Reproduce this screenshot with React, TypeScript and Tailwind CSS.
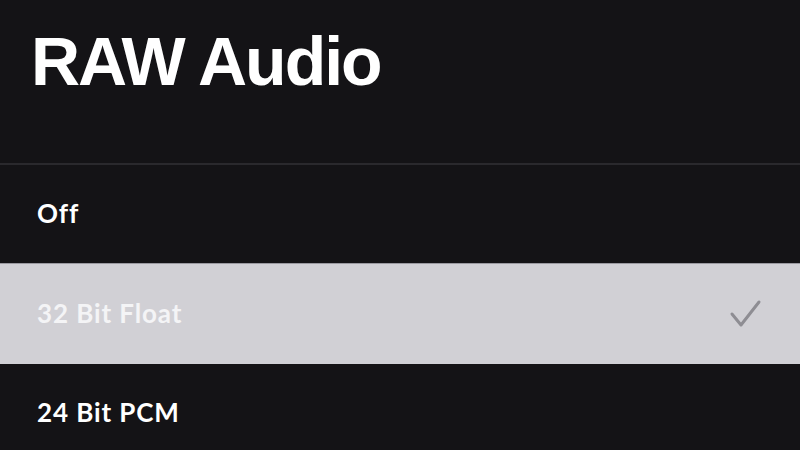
export default function App() {
  const rowText = "text-[26px] font-bold leading-none text-white tracking-[0.9px] -mt-[2px]";
  return (
    <div className="w-[800px] h-[450px] overflow-hidden bg-[#141316]" style={{ fontFamily: "Lato, 'Noto Sans', sans-serif" }}>
      <div className="h-[163px] pl-[31px] pt-[27px]">
        <h1
          className="text-[68px] font-bold leading-none text-white tracking-[-2px]"
          style={{ fontFamily: "'Liberation Sans', Arial, sans-serif" }}
        >
          RAW Audio
        </h1>
      </div>
      <div className="h-[2px] bg-[#2a292d]" />
      <div className="h-[98px] flex items-center pl-[37px]">
        <span className={rowText}>Off</span>
      </div>
      <div className="h-[101px] flex items-center justify-between pl-[37px] pr-[37px] bg-[#d1d0d5] border-t border-[#9a99a0]">
        <span className="text-[26px] font-bold leading-none text-[#f4f4f6] tracking-[0.9px] -mt-[2px]">32 Bit Float</span>
        <svg width="34" height="32" viewBox="0 0 34 32" fill="none">
          <path d="M3 16 L12 27 L30 4" stroke="#8e8d93" strokeWidth="3" strokeLinecap="round" strokeLinejoin="round" />
        </svg>
      </div>
      <div className="h-[98px] flex items-center pl-[37px]">
        <span className={rowText}>24 Bit PCM</span>
      </div>
    </div>
  );
}
